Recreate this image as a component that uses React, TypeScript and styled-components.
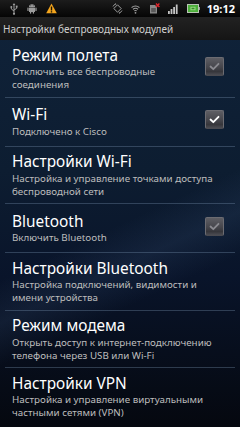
import React from "react";
import styled, { createGlobalStyle } from "styled-components";

const GlobalStyle = createGlobalStyle`
  html, body {
    margin: 0;
    padding: 0;
    background: #000;
  }
  body {
    font-family: "Noto Sans", "Open Sans", sans-serif;
  }
`;

const Screen = styled.div`
  width: 240px;
  height: 427px;
  overflow: hidden;
  display: flex;
  flex-direction: column;
  background:
    linear-gradient(155deg, transparent 52%, rgba(70, 100, 140, 0.16) 60%, transparent 68%),
    linear-gradient(180deg, #10233a 0%, #0d1d31 40%, #09142a 65%, #05080f 100%);
`;

const StatusBar = styled.div`
  height: 17px;
  flex-shrink: 0;
  display: flex;
  align-items: center;
  padding: 0 5px 0 10px;
  background: linear-gradient(180deg, #1c1c1c 0%, #050505 100%);
`;

const IconGroup = styled.div<{ $gap: number }>`
  display: flex;
  align-items: center;
  gap: ${(p) => p.$gap}px;
`;

const Spacer = styled.div`
  flex: 1;
`;

const Clock = styled.span`
  margin-left: 7px;
  color: #fff;
  font-weight: bold;
  font-size: 11px;
  line-height: 17px;
`;

const TitleBar = styled.div`
  height: 23px;
  flex-shrink: 0;
  display: flex;
  align-items: center;
  padding-left: 3px;
  color: #cfcfcf;
  font-size: 10px;
  background: linear-gradient(180deg, #222 0%, #151515 100%);
`;

const List = styled.div`
  display: flex;
  flex-direction: column;
`;

const Item = styled.div`
  display: flex;
  align-items: center;
  min-height: 48px;
  box-sizing: border-box;
  padding: 5.5px 16px 5.5px 12px;
`;

const Texts = styled.div`
  flex: 1;
  min-width: 0;
`;

const Title = styled.div`
  color: #fff;
  font-size: 15.4px;
  line-height: 19.5px;
  white-space: nowrap;
`;

const Summary = styled.div`
  color: #bdbdbd;
  font-size: 9.8px;
  line-height: 13px;
  white-space: nowrap;
`;

const Divider = styled.div`
  height: 1px;
  margin: 0 5px;
  background: rgba(120, 145, 175, 0.35);
`;

const CheckBox = styled.div<{ $checked: boolean }>`
  width: 19px;
  height: 19px;
  flex-shrink: 0;
  margin-left: 8px;
  margin-bottom: 4px;
  box-sizing: border-box;
  border-radius: 2px;
  border: 1px solid #6c6c72;
  border-bottom-color: #4a4a50;
  background: linear-gradient(180deg, #5e5e64 0%, #45454b 55%, #36363b 80%, #4c4c52 100%);
  display: flex;
  align-items: center;
  justify-content: center;
  color: ${(p) => (p.$checked ? "#fff" : "#8a8a90")};
`;

function Check() {
  return (
    <svg width="11" height="9" viewBox="0 0 11 9">
      <path d="M1.5 4.5 L4.3 7.2 L9.5 1.8" fill="none" stroke="currentColor" strokeWidth="1.8" strokeLinecap="round" strokeLinejoin="round" />
    </svg>
  );
}

const grey = "#9d9d9d";

function UsbIcon() {
  return (
    <svg width="8" height="12" viewBox="0 0 8 12">
      <path d="M4 1 L4 11 M4 8 L1.3 6 L1.3 4.5 M4 7 L6.7 5.3 L6.7 4" fill="none" stroke={grey} strokeWidth="1" />
      <path d="M4 0 L5.3 2 L2.7 2 Z" fill={grey} />
      <circle cx="1.3" cy="4" r="1" fill={grey} />
      <rect x="5.8" y="2.6" width="1.8" height="1.8" fill={grey} />
      <circle cx="4" cy="10.8" r="1.1" fill={grey} />
    </svg>
  );
}

function AndroidIcon() {
  return (
    <svg width="10" height="11" viewBox="0 0 10 11">
      <path d="M2 4 A3 2.8 0 0 1 8 4 Z" fill={grey} />
      <circle cx="3.8" cy="2.7" r="0.45" fill="#111" />
      <circle cx="6.2" cy="2.7" r="0.45" fill="#111" />
      <rect x="2" y="4.5" width="6" height="4.5" rx="0.6" fill={grey} />
      <rect x="0.4" y="4.5" width="1.2" height="3.5" rx="0.6" fill={grey} />
      <rect x="8.4" y="4.5" width="1.2" height="3.5" rx="0.6" fill={grey} />
      <rect x="3" y="8.5" width="1.2" height="2.2" rx="0.6" fill={grey} />
      <rect x="5.8" y="8.5" width="1.2" height="2.2" rx="0.6" fill={grey} />
    </svg>
  );
}

function WarningIcon() {
  return (
    <svg width="11" height="11" viewBox="0 0 11 11">
      <path d="M5.5 0.5 L10.8 10.3 L0.2 10.3 Z" fill="#f3a51d" strokeLinejoin="round" />
      <rect x="4.8" y="3.5" width="1.4" height="4" fill="#1a1200" />
      <rect x="4.8" y="8.2" width="1.4" height="1.3" fill="#1a1200" />
    </svg>
  );
}

function RotateIcon() {
  return (
    <svg width="11" height="11" viewBox="0 0 11 11">
      <path d="M5.5 1.8 L9.2 5.5 L5.5 9.2 L1.8 5.5 Z" fill="none" stroke={grey} strokeWidth="1" />
      <path d="M1 3.5 A4.8 4.8 0 0 1 3.5 1" fill="none" stroke={grey} strokeWidth="0.9" />
      <path d="M10 7.5 A4.8 4.8 0 0 1 7.5 10" fill="none" stroke={grey} strokeWidth="0.9" />
      <path d="M3.5 0 L4.4 1.2 L3 1.9 Z" fill={grey} />
      <path d="M7.5 11 L6.6 9.8 L8 9.1 Z" fill={grey} />
    </svg>
  );
}

function WifiIcon() {
  return (
    <svg width="9" height="10" viewBox="0 0 9 10">
      <path d="M0.6 3.6 A5.5 5.5 0 0 1 8.4 3.6" fill="none" stroke={grey} strokeWidth="1.1" />
      <path d="M2 5.3 A3.4 3.4 0 0 1 7 5.3" fill="none" stroke={grey} strokeWidth="1.1" />
      <path d="M3.3 7 A1.6 1.6 0 0 1 5.7 7" fill="none" stroke={grey} strokeWidth="1.1" />
      <circle cx="4.5" cy="8.8" r="0.9" fill={grey} />
    </svg>
  );
}

function SimIcon() {
  return (
    <svg width="11" height="11" viewBox="0 0 11 11">
      <path d="M1 2 L6 2 L8 4 L8 10.5 L1 10.5 Z" fill="#8a8a8a" />
      <rect x="2.2" y="5" width="4.6" height="4.2" fill="#5a5a5a" />
      <path d="M7 0.6 L10.4 4 M10.4 0.6 L7 4" stroke="#e0252b" strokeWidth="1.4" />
    </svg>
  );
}

function SignalIcon() {
  return (
    <svg width="10" height="10" viewBox="0 0 10 10">
      <rect x="0" y="7" width="1.8" height="3" fill="#c4c4c4" />
      <rect x="2.6" y="5" width="1.8" height="5" fill="#c4c4c4" />
      <rect x="5.2" y="3" width="1.8" height="7" fill="#c4c4c4" />
      <rect x="7.8" y="0.5" width="1.8" height="9.5" fill="#c4c4c4" />
    </svg>
  );
}

function BatteryIcon() {
  return (
    <svg width="13" height="9" viewBox="0 0 13 9">
      <rect x="0.5" y="0.5" width="11" height="8" fill="#4cae3a" stroke="#b9c4b5" strokeWidth="1" />
      <rect x="11.5" y="3" width="1.3" height="3" fill="#b9c4b5" />
      <rect x="3.5" y="2.8" width="5" height="3.4" fill="#9adf83" />
      <rect x="4.5" y="3.7" width="3" height="1.6" fill="#3b8a2c" />
    </svg>
  );
}

type Pref = {
  title: string;
  summary: string[];
  checked?: boolean;
};

const prefs: Pref[] = [
  { title: "Режим полета", summary: ["Отключить все беспроводные", "соединения"], checked: false },
  { title: "Wi-Fi", summary: ["Подключено к Cisco"], checked: true },
  { title: "Настройки Wi-Fi", summary: ["Настройка и управление точками доступа", "беспроводной сети"] },
  { title: "Bluetooth", summary: ["Включить Bluetooth"], checked: false },
  { title: "Настройки Bluetooth", summary: ["Настройка подключений, видимости и", "имени устройства"] },
  { title: "Режим модема", summary: ["Открыть доступ к интернет-подключению", "телефона через USB или Wi-Fi"] },
  { title: "Настройки VPN", summary: ["Настройка и управление виртуальными", "частными сетями (VPN)"] },
];

export default function App() {
  return (
    <>
      <GlobalStyle />
      <Screen>
        <StatusBar>
          <IconGroup $gap={9}>
            <UsbIcon />
            <AndroidIcon />
            <WarningIcon />
          </IconGroup>
          <Spacer />
          <IconGroup $gap={8.5}>
            <RotateIcon />
            <WifiIcon />
            <SimIcon />
            <SignalIcon />
            <BatteryIcon />
          </IconGroup>
          <Clock>19:12</Clock>
        </StatusBar>
        <TitleBar>Настройки беспроводных модулей</TitleBar>
        <List>
          {prefs.map((p, i) => (
            <React.Fragment key={p.title}>
              {i > 0 && <Divider />}
              <Item>
                <Texts>
                  <Title>{p.title}</Title>
                  {p.summary.map((line) => (
                    <Summary key={line}>{line}</Summary>
                  ))}
                </Texts>
                {p.checked !== undefined && (
                  <CheckBox $checked={p.checked}>
                    <Check />
                  </CheckBox>
                )}
              </Item>
            </React.Fragment>
          ))}
        </List>
      </Screen>
    </>
  );
}
